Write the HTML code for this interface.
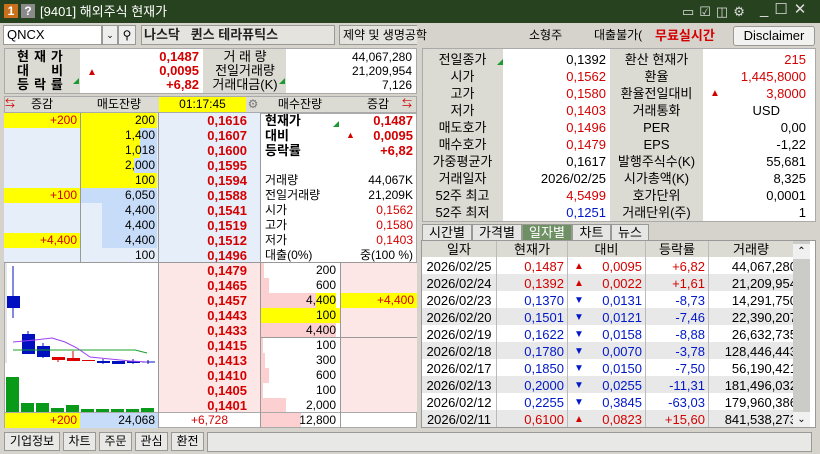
<!DOCTYPE html>
<html><head><meta charset="utf-8"><style>
*{margin:0;padding:0;box-sizing:border-box}
body{width:820px;height:454px;overflow:hidden;background:#d6d3cc;font-family:"Liberation Sans","Noto Sans CJK KR",sans-serif;font-size:12px;color:#000;position:relative}
.a{position:absolute;white-space:nowrap;line-height:15px}
.r{text-align:right}.c{text-align:center}
.red{color:#d40000}.blue{color:#0018c8}.b{font-weight:bold}
.lb{background:#dcdbd3}
.w{background:#fff}
.y{background:#ffff00}
.bx{border:1px solid #9a9a94}
</style></head><body>
<div class="a" style="left:0;top:0;width:820px;height:23px;background:#27421e"></div>
<div class="a c" style="left:4px;top:4px;width:14px;height:14px;background:#c8701c;color:#fff;font-weight:bold;line-height:14px">1</div>
<div class="a c" style="left:21px;top:4px;width:14px;height:14px;background:#8a8a8a;color:#fff;font-weight:bold;line-height:14px">?</div>
<div class="a" style="left:40px;top:4px;color:#fff;font-size:13px">[9401] 해외주식 현재가</div>
<div class="a" style="left:682px;top:4px;color:#ddd;font-size:13px;letter-spacing:5px">▭☑◫⚙</div>
<div class="a" style="left:760px;top:2px;color:#ddd;font-size:15px;letter-spacing:6px">_☐✕</div>
<div class="a w bx" style="left:3px;top:25px;width:99px;height:20px;padding-left:3px;line-height:18px;font-size:13px">QNCX</div>
<div class="a bx c" style="left:102px;top:25px;width:16px;height:20px;background:#eee;font-size:9px;line-height:18px">⌄</div>
<div class="a bx c" style="left:118px;top:25px;width:18px;height:20px;background:#eee;line-height:18px">⚲</div>
<div class="a bx b" style="left:141px;top:25px;width:194px;height:20px;background:#e4e3de;padding-left:2px;line-height:18px;font-size:13px;color:#222">나스닥 &nbsp;&nbsp;퀸스 테라퓨틱스</div>
<div class="a bx" style="left:339px;top:25px;width:78px;height:20px;background:#e4e3de;border-right:none"></div>
<div class="a" style="left:343px;top:28px;font-size:12px">제약 및 생명공학</div>
<div class="a" style="left:529px;top:28px">소형주</div>
<div class="a" style="left:594px;top:28px">대출불가(</div>
<div class="a b red" style="left:655px;top:28px;font-size:13px">무료실시간</div>
<div class="a c bx" style="left:733px;top:26px;width:82px;height:20px;background:#f2f2f0;border-radius:3px;line-height:18px;font-size:13px">Disclaimer</div>
<div class="a lb" style="left:4px;top:48px;width:413px;height:46px;border:1px solid #aaa"></div>
<div class="a w" style="left:80px;top:49px;width:123px;height:44px"></div>
<div class="a w" style="left:286px;top:49px;width:130px;height:44px"></div>
<div class="a b" style="left:17px;top:50px;font-size:13px;line-height:14px;letter-spacing:5px">현재가<br>대&nbsp;&nbsp;비<br>등락률</div>
<div class="a" style="left:73px;top:78px;width:0;height:0;border-left:6px solid transparent;border-bottom:6px solid #1a9a30"></div>
<div class="a r b red" style="left:80px;top:50px;width:119px;line-height:14px;font-size:13px">0,1487<br>0,0095<br>+6,82</div>
<div class="a red" style="left:87px;top:65px;font-size:10px">▲</div>
<div class="a c" style="left:205px;top:50px;width:80px;line-height:14px;font-size:13px">거 래 량<br>전일거래량<br>거래대금(K)</div>
<div class="a" style="left:279px;top:78px;width:0;height:0;border-left:6px solid transparent;border-bottom:6px solid #1a9a30"></div>
<div class="a r" style="left:286px;top:50px;width:126px;line-height:14px">44,067,280<br>21,209,954<br>7,126</div>
<div class="a lb" style="left:4px;top:96px;width:413px;height:17px;border:1px solid #aaa"></div>
<div class="a c" style="left:4px;top:97px;width:76px">증감</div>
<div class="a c" style="left:80px;top:97px;width:78px">매도잔량</div>
<div class="a c y" style="left:159px;top:97px;width:87px">01:17:45</div>
<div class="a c" style="left:246px;top:97px;width:14px;color:#777">⚙</div>
<div class="a c" style="left:260px;top:97px;width:80px">매수잔량</div>
<div class="a c" style="left:340px;top:97px;width:76px">증감</div>
<div class="a" style="left:5px;top:97px;color:#c00;font-size:10px">⇆</div>
<div class="a" style="left:402px;top:97px;color:#c00;font-size:10px">⇆</div>
<div class="a" style="left:4px;top:113px;width:413px;height:300px;background:#fff;border:1px solid #aaa"></div>
<div class="a" style="left:4px;top:113px;width:154px;height:150px;background:#e6eef9"></div>
<div class="a" style="left:159px;top:113px;width:101px;height:150px;background:#e6eef9"></div>
<div class="a" style="left:159px;top:263px;width:101px;height:150px;background:#fde6e6"></div>
<div class="a" style="left:340px;top:263px;width:77px;height:150px;background:#fde6e6"></div>
<div class="a" style="left:4px;top:262px;width:413px;height:1px;background:#999"></div>
<div class="a" style="left:158px;top:113px;width:1px;height:300px;background:#999"></div>
<div class="a" style="left:260px;top:113px;width:1px;height:300px;background:#999"></div>
<div class="a" style="left:340px;top:263px;width:1px;height:150px;background:#999"></div>
<div class="a" style="left:80px;top:113px;width:1px;height:150px;background:#999"></div>
<div class="a y r red" style="left:4px;top:113px;width:76px;padding-right:3px">+200</div>
<div class="a y r red" style="left:4px;top:188px;width:76px;padding-right:3px">+100</div>
<div class="a y r red" style="left:4px;top:233px;width:76px;padding-right:3px">+4,400</div>
<div class="a y" style="left:81px;top:113px;width:76px;height:75px"></div>
<div class="a" style="left:140px;top:128px;width:17px;height:15px;background:#c6dcf8"></div>
<div class="a" style="left:140px;top:143px;width:17px;height:15px;background:#c6dcf8"></div>
<div class="a" style="left:134px;top:158px;width:23px;height:15px;background:#c6dcf8"></div>
<div class="a" style="left:81px;top:188px;width:76px;height:15px;background:#c6dcf8"></div>
<div class="a" style="left:102px;top:203px;width:55px;height:15px;background:#c6dcf8"></div>
<div class="a" style="left:102px;top:218px;width:55px;height:15px;background:#c6dcf8"></div>
<div class="a" style="left:102px;top:233px;width:55px;height:15px;background:#c6dcf8"></div>
<div class="a r" style="left:80px;top:113px;width:75px;line-height:15px">200<br>1,400<br>1,018<br>2,000<br>100<br>6,050<br>4,400<br>4,400<br>4,400<br>100</div>
<div class="a r b red" style="left:159px;top:113px;width:88px;font-size:13px;line-height:15px">0,1616<br>0,1607<br>0,1600<br>0,1595<br>0,1594<br>0,1588<br>0,1541<br>0,1519<br>0,1512<br>0,1496<br>0,1479<br>0,1465<br>0,1457<br>0,1443<br>0,1433<br>0,1415<br>0,1413<br>0,1410<br>0,1405<br>0,1401</div>
<div class="a b" style="left:265px;top:113px;font-size:13px;line-height:15px">현재가<br>대비<br>등락률</div>
<div class="a r b red" style="left:300px;top:113px;width:113px;font-size:13px;line-height:15px">0,1487<br>0,0095<br>+6,82</div>
<div class="a red" style="left:346px;top:128px;font-size:9px">▲</div>
<div class="a" style="left:333px;top:121px;width:0;height:0;border-left:6px solid transparent;border-bottom:6px solid #1a9a30"></div>
<div class="a" style="left:265px;top:173px;line-height:15px">거래량<br>전일거래량<br>시가<br>고가<br>저가<br>대출(0%)</div>
<div class="a r" style="left:300px;top:173px;width:113px;line-height:15px">44,067K<br>21,209K<br><span class="red">0,1562<br>0,1580<br>0,1403</span><br>중(100 %)</div>
<div class="a" style="left:261px;top:263px;width:3px;height:15px;background:#fcd0d0"></div>
<div class="a" style="left:261px;top:278px;width:8px;height:15px;background:#fcd0d0"></div>
<div class="a" style="left:261px;top:293px;width:75px;height:15px;background:#fcd0d0"></div>
<div class="a y" style="left:316px;top:293px;width:20px;height:15px"></div>
<div class="a y" style="left:261px;top:308px;width:79px;height:15px"></div>
<div class="a" style="left:261px;top:323px;width:75px;height:15px;background:#fcd0d0"></div>
<div class="a" style="left:261px;top:338px;width:2px;height:15px;background:#fcd0d0"></div>
<div class="a" style="left:261px;top:353px;width:4px;height:15px;background:#fcd0d0"></div>
<div class="a" style="left:261px;top:368px;width:8px;height:15px;background:#fcd0d0"></div>
<div class="a" style="left:261px;top:383px;width:2px;height:15px;background:#fcd0d0"></div>
<div class="a" style="left:261px;top:398px;width:25px;height:15px;background:#fcd0d0"></div>
<div class="a" style="left:260px;top:337px;width:157px;height:1px;background:#999"></div>
<div class="a r" style="left:260px;top:263px;width:76px;line-height:15px">200<br>600<br>4,400<br>100<br>4,400<br>100<br>300<br>600<br>100<br>2,000</div>
<div class="a y r red" style="left:341px;top:293px;width:76px;padding-right:3px">+4,400</div>
<svg class="a" style="left:5px;top:263px" width="153" height="149">
<line x1="1" y1="0" x2="1" y2="100" stroke="#ccc"/>
<line x1="8" y1="3" x2="8" y2="55" stroke="#0010c0"/><rect x="2" y="33" width="13" height="12" fill="#0010c0"/>
<line x1="23" y1="68" x2="23" y2="91" stroke="#0010c0"/><rect x="17" y="71" width="13" height="20" fill="#0010c0"/>
<line x1="38" y1="80" x2="38" y2="95" stroke="#0010c0"/><rect x="32" y="83" width="13" height="11" fill="#0010c0"/>
<rect x="47" y="94" width="13" height="3" fill="#d00"/><line x1="53" y1="94" x2="53" y2="99" stroke="#d00"/>
<rect x="62" y="95" width="13" height="3" fill="#d00"/><line x1="68" y1="88" x2="68" y2="98" stroke="#d00"/>
<rect x="77" y="97" width="13" height="1" fill="#d00"/>
<rect x="92" y="98" width="13" height="2" fill="#0010c0"/><line x1="98" y1="96" x2="98" y2="101" stroke="#0010c0"/>
<rect x="107" y="98" width="13" height="3" fill="#0010c0"/>
<rect x="122" y="98" width="13" height="2" fill="#0010c0"/><line x1="128" y1="96" x2="128" y2="101" stroke="#0010c0"/>
<line x1="137" y1="99" x2="150" y2="99" stroke="#0010c0"/><line x1="143" y1="97" x2="143" y2="101" stroke="#0010c0"/>
<polyline points="8,87 130,87 142,90" fill="none" stroke="#18a028"/>
<polyline points="8,79 30,77 47,75 60,79 72,85 85,94 105,96 125,98 142,99" fill="none" stroke="#a040f0"/>
<rect x="1" y="114" width="13" height="35" fill="#0a9a1a"/>
<rect x="16" y="140" width="13" height="9" fill="#0a9a1a"/>
<rect x="31" y="140" width="13" height="9" fill="#0a9a1a"/>
<rect x="46" y="145" width="13" height="4" fill="#0a9a1a"/>
<rect x="61" y="142" width="13" height="7" fill="#0a9a1a"/>
<rect x="76" y="146" width="13" height="3" fill="#0a9a1a"/>
<rect x="91" y="146" width="13" height="3" fill="#0a9a1a"/>
<rect x="106" y="146" width="13" height="3" fill="#0a9a1a"/>
<rect x="121" y="146" width="13" height="3" fill="#0a9a1a"/>
<rect x="136" y="145" width="13" height="4" fill="#0a9a1a"/>
</svg>
<div class="a" style="left:4px;top:412px;width:413px;height:16px;background:#fff;border:1px solid #aaa"></div>
<div class="a y r red" style="left:5px;top:413px;width:75px;padding-right:3px">+200</div>
<div class="a r" style="left:80px;top:413px;width:78px;background:#c6dcf8;padding-right:3px">24,068</div>
<div class="a c red" style="left:159px;top:413px;width:101px">+6,728</div>
<div class="a" style="left:261px;top:413px;width:40px;height:14px;background:#fcd0d0"></div>
<div class="a r" style="left:260px;top:413px;width:76px">12,800</div>
<div class="a" style="left:340px;top:412px;width:1px;height:16px;background:#999"></div>
<div class="a" style="left:260px;top:412px;width:1px;height:16px;background:#999"></div>
<div class="a" style="left:158px;top:412px;width:1px;height:16px;background:#999"></div>
<div class="a bx c" style="left:4px;top:432px;width:56px;height:19px;background:#e8e8e6;font-size:12px;line-height:17px">기업정보</div>
<div class="a bx c" style="left:63px;top:432px;width:33px;height:19px;background:#e8e8e6;line-height:17px">차트</div>
<div class="a bx c" style="left:99px;top:432px;width:33px;height:19px;background:#e8e8e6;line-height:17px">주문</div>
<div class="a bx c" style="left:135px;top:432px;width:33px;height:19px;background:#e8e8e6;line-height:17px">관심</div>
<div class="a bx c" style="left:171px;top:432px;width:33px;height:19px;background:#e8e8e6;line-height:17px">환전</div>
<div class="a bx" style="left:207px;top:432px;width:605px;height:20px;background:#e8e8e6"></div>
<div class="a" style="left:422px;top:48px;width:394px;height:174px;border:1px solid #aaa;background:#dcdbd3"></div>
<div class="a w" style="left:503px;top:49px;width:107px;height:172px"></div>
<div class="a w" style="left:703px;top:49px;width:112px;height:172px"></div>
<div class="a c" style="left:422px;top:51px;width:81px;line-height:17px;font-size:13px">전일종가<br>시가<br>고가<br>저가<br>매도호가<br>매수호가<br>가중평균가<br>거래일자<br>52주 최고<br>52주 최저</div>
<div class="a r" style="left:503px;top:51px;width:103px;line-height:17px;font-size:13px">0,1392<br><span class="red">0,1562<br>0,1580<br>0,1403<br>0,1496<br>0,1479</span><br>0,1617<br>2026/02/25<br><span class="red">4,5499</span><br><span class="blue">0,1251</span></div>
<div class="a" style="left:497px;top:59px;width:0;height:0;border-left:6px solid transparent;border-bottom:6px solid #1a9a30"></div>
<div class="a c" style="left:610px;top:51px;width:93px;line-height:17px;font-size:13px">환산 현재가<br>환율<br>환율전일대비<br>거래통화<br>PER<br>EPS<br>발행주식수(K)<br>시가총액(K)<br>호가단위<br>거래단위(주)</div>
<div class="a r" style="left:703px;top:51px;width:103px;line-height:17px;font-size:13px"><span class="red">215<br>1,445,8000<br>3,8000</span><br><span style="margin-right:26px">USD</span><br>0,00<br>-1,22<br>55,681<br>8,325<br>0,0001<br>1</div>
<div class="a red" style="left:710px;top:86px;font-size:10px">▲</div>
<div class="a bx c" style="left:422px;top:224px;width:50px;height:17px;background:#e6e6e4;line-height:15px;font-size:13px">시간별</div>
<div class="a bx c" style="left:472px;top:224px;width:50px;height:17px;background:#e6e6e4;line-height:15px;font-size:13px">가격별</div>
<div class="a bx c" style="left:522px;top:224px;width:50px;height:17px;background:#6f8f64;color:#fff;line-height:15px;font-size:13px">일자별</div>
<div class="a bx c" style="left:572px;top:224px;width:39px;height:17px;background:#e6e6e4;line-height:15px;font-size:13px">차트</div>
<div class="a bx c" style="left:611px;top:224px;width:38px;height:17px;background:#e6e6e4;line-height:15px;font-size:13px">뉴스</div>
<div class="a" style="left:421px;top:240px;width:395px;height:188px;border:1px solid #999;background:#fff"></div>
<div class="a lb" style="left:422px;top:241px;width:371px;height:16px"></div>
<div class="a" style="left:793px;top:241px;width:17px;height:186px;background:#cbcbc8"></div>
<div class="a c" style="left:793px;top:244px;width:17px;font-size:10px;background:#f0f0f0">⌃</div>
<div class="a c" style="left:793px;top:412px;width:17px;font-size:10px;background:#f0f0f0">⌄</div>
<div class="a" style="left:422px;top:274px;width:371px;height:17px;background:#e8e8e8"></div>
<div class="a" style="left:422px;top:308px;width:371px;height:17px;background:#e8e8e8"></div>
<div class="a" style="left:422px;top:342px;width:371px;height:17px;background:#e8e8e8"></div>
<div class="a" style="left:422px;top:376px;width:371px;height:17px;background:#e8e8e8"></div>
<div class="a" style="left:422px;top:410px;width:371px;height:17px;background:#e8e8e8"></div>
<div class="a" style="left:496px;top:241px;width:1px;height:186px;background:#bbb"></div>
<div class="a" style="left:567px;top:241px;width:1px;height:186px;background:#bbb"></div>
<div class="a" style="left:645px;top:241px;width:1px;height:186px;background:#bbb"></div>
<div class="a" style="left:708px;top:241px;width:1px;height:186px;background:#bbb"></div>
<div class="a c" style="left:422px;top:242px;width:74px;font-size:13px">일자</div>
<div class="a c" style="left:497px;top:242px;width:70px;font-size:13px">현재가</div>
<div class="a c" style="left:568px;top:242px;width:77px;font-size:13px">대비</div>
<div class="a c" style="left:646px;top:242px;width:62px;font-size:13px">등락률</div>
<div class="a c" style="left:709px;top:242px;width:84px;font-size:13px">거래량</div>
<div class="a c" style="left:422px;top:258px;width:74px;line-height:17px;font-size:13px">2026/02/25<br>2026/02/24<br>2026/02/23<br>2026/02/20<br>2026/02/19<br>2026/02/18<br>2026/02/17<br>2026/02/13<br>2026/02/12<br>2026/02/11</div>
<div class="a r" style="left:497px;top:258px;width:67px;line-height:17px;font-size:13px"><span class="red">0,1487<br>0,1392</span><br><span class="blue">0,1370<br>0,1501<br>0,1622<br>0,1780<br>0,1850<br>0,2000<br>0,2255</span><br><span class="red">0,6100</span></div>
<div class="a" style="left:574px;top:258px;width:12px;line-height:17px;font-size:10px"><span class="red">▲<br>▲</span><br><span class="blue">▼<br>▼<br>▼<br>▼<br>▼<br>▼<br>▼</span><br><span class="red">▲</span></div>
<div class="a r" style="left:568px;top:258px;width:74px;line-height:17px;font-size:13px"><span class="red">0,0095<br>0,0022</span><br><span class="blue">0,0131<br>0,0121<br>0,0158<br>0,0070<br>0,0150<br>0,0255<br>0,3845</span><br><span class="red">0,0823</span></div>
<div class="a r" style="left:646px;top:258px;width:59px;line-height:17px;font-size:13px"><span class="red">+6,82<br>+1,61</span><br><span class="blue">-8,73<br>-7,46<br>-8,88<br>-3,78<br>-7,50<br>-11,31<br>-63,03</span><br><span class="red">+15,60</span></div>
<div class="a" style="left:709px;top:258px;width:84px;overflow:hidden;line-height:17px;font-size:13px"><div style="text-align:right;width:88px">44,067,280<br>21,209,954<br>14,291,750<br>22,390,207<br>26,632,735<br>128,446,443<br>56,190,421<br>181,496,032<br>179,960,386<br>841,538,273</div></div>
</body></html>
